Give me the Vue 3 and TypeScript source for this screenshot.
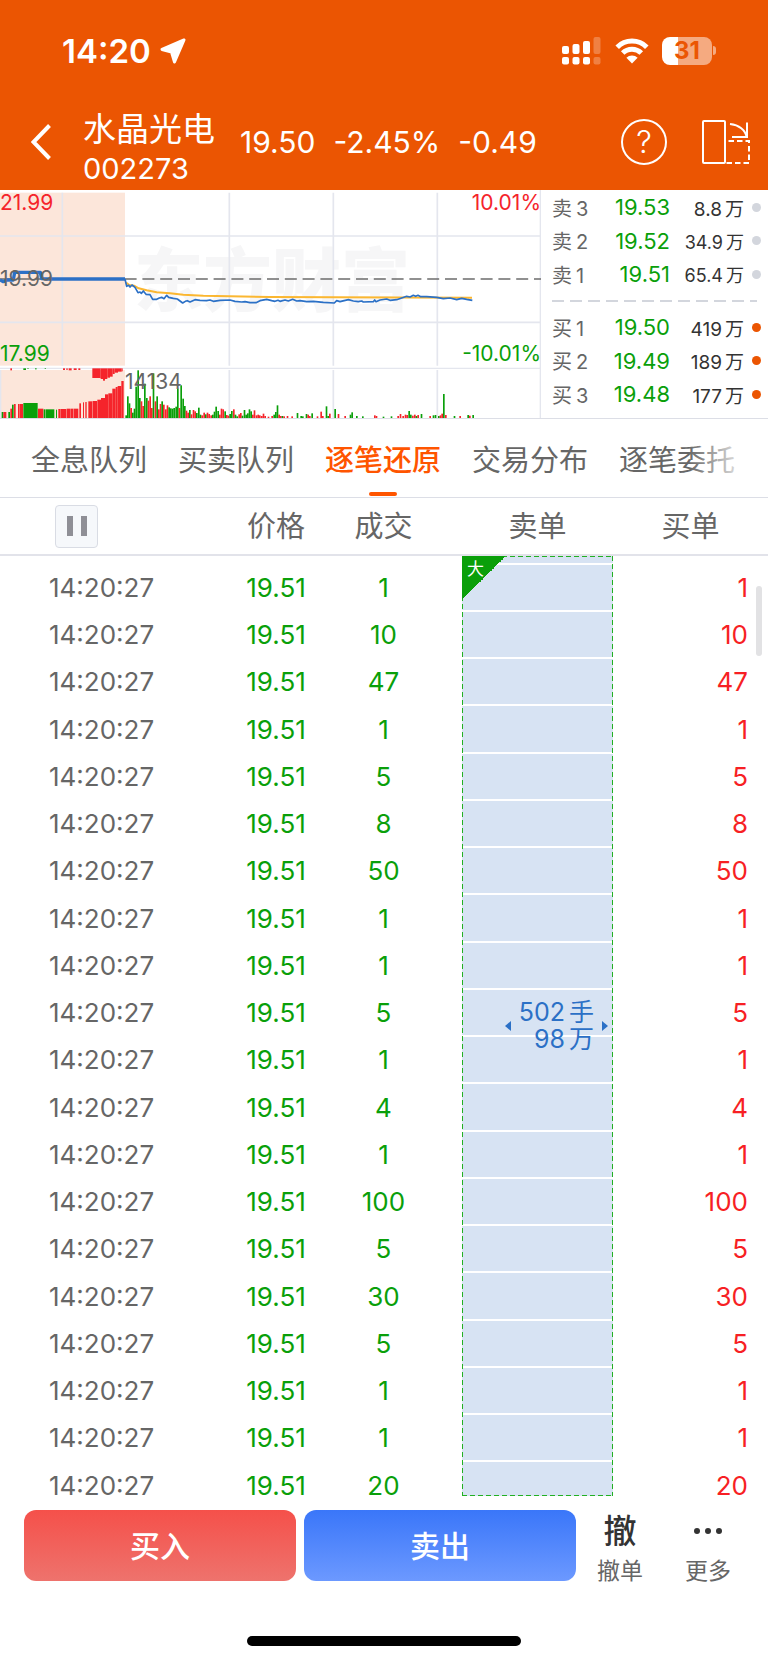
<script setup lang="ts">
import { ref } from 'vue'

type Level = { side: string; rank: number; price: string; volume: string; kind: 'ask' | 'bid' }
type Bar = [x: number, top: number, tone: 'r' | 'g', width?: number]

const asks: Level[] = [
  { side: '卖', rank: 3, price: '19.53', volume: '8.8', kind: 'ask' },
  { side: '卖', rank: 2, price: '19.52', volume: '34.9', kind: 'ask' },
  { side: '卖', rank: 1, price: '19.51', volume: '65.4', kind: 'ask' },
]
const bids: Level[] = [
  { side: '买', rank: 1, price: '19.50', volume: '419', kind: 'bid' },
  { side: '买', rank: 2, price: '19.49', volume: '189', kind: 'bid' },
  { side: '买', rank: 3, price: '19.48', volume: '177', kind: 'bid' },
]

const tabs = ['全息队列', '买卖队列', '逐笔还原', '交易分布', '逐笔委托']
const activeTab = ref('逐笔还原')
const paused = ref(false)

const trades = [1, 10, 47, 1, 5, 8, 50, 1, 1, 5, 1, 4, 1, 100, 5, 30, 5, 1, 1, 20]

// Call-auction period: volume rising from the baseline
const auctionBars: Bar[] = [
  [5, 672, 'g'], [10, 672, 'r', 9], [25, 672, 'g', 5], [31, 662, 'r'], [36, 650, 'g'], [42, 648, 'r', 5],
  [54, 648, 'r', 5], [60, 648, 'r', 9], [70, 645, 'g', 43], [114, 662, 'r', 16], [131, 664, 'g', 5], [137, 664, 'g', 26],
  [168, 665, 'g', 3], [175, 663, 'r', 7], [183, 663, 'r', 16], [200, 662, 'r', 12], [213, 662, 'r', 7], [221, 662, 'r', 14],
  [238, 646, 'r', 5], [249, 643, 'r', 3], [256, 642, 'r', 4], [265, 640, 'r', 12], [278, 639, 'r', 13], [292, 635, 'r', 11],
  [303, 630, 'r', 12], [315, 619, 'r', 10], [325, 616, 'r', 12], [337, 602, 'r', 10], [347, 597, 'r', 6], [353, 594, 'r', 11],
  [364, 579, 'r', 7],
]

// Unmatched volume hanging from the divider
const hangingBars: Bar[] = [
  [31, 547, 'r', 5], [70, 546, 'g', 8], [82, 543, 'g', 4], [105, 544, 'g', 5], [134, 543, 'g', 4],
  [189, 546, 'r', 6], [199, 546, 'r', 4], [206, 547, 'r', 9], [221, 546, 'r', 9], [235, 546, 'r', 6],
  [277, 570, 'r', 25], [302, 573, 'r', 7], [309, 578, 'r', 6], [315, 573, 'r', 7], [322, 569, 'r', 8],
  [330, 566, 'r', 8], [338, 558, 'r', 6], [344, 554, 'r', 10], [354, 551, 'r', 11], [365, 550, 'r', 3],
]

const sessionBars: Bar[] = [
  [376, 682, 'g'], [381, 625, 'g'], [386, 646, 'g'], [391, 660, 'r'], [396, 674, 'g'], [401, 662, 'g'], [406, 596, 'g'],
  [412, 547, 'g'], [417, 630, 'g'], [422, 640, 'r'], [427, 654, 'r'], [432, 587, 'g'], [438, 630, 'g'], [443, 638, 'r'],
  [448, 625, 'r'], [453, 660, 'r'], [458, 556, 'g'], [464, 640, 'r'], [469, 625, 'g'], [474, 664, 'r'], [479, 648, 'r'],
  [484, 640, 'g'], [489, 650, 'r'], [495, 664, 'r'], [500, 652, 'r'], [505, 658, 'g'], [510, 661, 'g'], [515, 662, 'g'],
  [520, 660, 'g'], [526, 656, 'g'], [531, 602, 'g'], [536, 660, 'r'], [541, 592, 'g'], [547, 632, 'g'], [552, 654, 'g'],
  [557, 668, 'r'], [562, 674, 'r'], [567, 666, 'g'], [572, 679, 'r'], [578, 666, 'r'], [583, 670, 'r'], [588, 675, 'g'],
  [594, 659, 'g'], [599, 680, 'g'], [604, 682, 'r'], [610, 674, 'r'], [615, 679, 'g'], [620, 674, 'r'], [625, 678, 'r'],
  [631, 682, 'r'], [636, 680, 'g'], [641, 671, 'g'], [646, 656, 'g'], [652, 669, 'g'], [657, 680, 'r'], [662, 662, 'r'],
  [667, 664, 'r'], [673, 670, 'g'], [678, 681, 'r'], [683, 683, 'r'], [688, 678, 'g'], [693, 669, 'g'], [699, 664, 'r'],
  [704, 680, 'g'], [709, 685, 'g'], [715, 679, 'r'], [720, 675, 'r'], [725, 683, 'g'], [731, 666, 'g'], [736, 680, 'g'],
  [741, 676, 'g'], [746, 664, 'g'], [751, 670, 'g'], [756, 680, 'r'], [761, 667, 'r'], [767, 682, 'r'], [772, 680, 'r'],
  [777, 682, 'r'], [783, 684, 'r'], [788, 677, 'r'], [793, 684, 'r'], [803, 686, 'r'], [814, 684, 'r'], [820, 680, 'g'],
  [825, 672, 'g'], [830, 652, 'g'], [835, 680, 'r'], [840, 684, 'r'], [845, 684, 'g'], [850, 685, 'r'], [860, 684, 'r'],
  [874, 685, 'r'], [890, 675, 'g'], [901, 684, 'g'], [906, 685, 'g'], [917, 678, 'g'], [922, 680, 'r'], [927, 684, 'r'],
  [934, 676, 'g'], [950, 685, 'r'], [961, 671, 'r'], [966, 684, 'r'], [977, 655, 'g'], [982, 684, 'g'], [987, 677, 'r'],
  [1003, 663, 'g'], [1013, 678, 'r'], [1033, 684, 'r'], [1049, 680, 'g'], [1054, 673, 'g'], [1068, 684, 'g'], [1086, 685, 'g'],
  [1122, 682, 'r'], [1127, 684, 'r'], [1148, 686, 'g'], [1172, 685, 'g'], [1192, 684, 'r'], [1199, 678, 'r'], [1207, 684, 'r'],
  [1214, 680, 'r'], [1219, 681, 'r'], [1225, 669, 'g'], [1230, 680, 'g'], [1236, 683, 'r'], [1242, 680, 'r'], [1247, 684, 'g'],
  [1252, 681, 'r'], [1262, 678, 'g'], [1288, 684, 'r'], [1298, 682, 'g'], [1304, 681, 'g'], [1314, 684, 'g'], [1319, 682, 'r'],
  [1324, 677, 'r'], [1329, 618, 'g'], [1335, 681, 'r'], [1361, 684, 'g'], [1378, 684, 'r'], [1402, 681, 'g'], [1407, 683, 'r'],
  [1417, 681, 'g'],
]

const toneFill = { r: '#f5242b', g: '#0a9f0a' }
</script>

<template>
  <div class="page">
    <header class="top">
      <div class="status">
        <div class="clock">
          <span>14:20</span>
          <svg class="locate" viewBox="0 0 26 26" aria-hidden="true">
            <path d="M24 2 L2 11.500 L11.500 14 L14.500 24 Z" />
          </svg>
        </div>
        <div class="signals">
          <svg class="cell" viewBox="0 0 39 28" aria-hidden="true">
            <g fill="#fff">
              <rect x="0" y="9" width="7" height="8" rx="2" />
              <rect x="10.500" y="7" width="7" height="10" rx="2" />
              <rect x="21" y="4" width="7" height="13" rx="2" />
              <rect x="0" y="20" width="7" height="7.500" rx="2" />
              <rect x="10.500" y="20" width="7" height="7.500" rx="2" />
              <rect x="21" y="20" width="7" height="7.500" rx="2" />
            </g>
            <g fill="#fff" opacity=".25">
              <rect x="31.500" y="0" width="7" height="17" rx="2" />
              <rect x="31.500" y="20" width="7" height="7.500" rx="2" />
            </g>
          </svg>
          <svg class="wifi" viewBox="0 0 34 26" aria-hidden="true">
            <g fill="none" stroke="#fff" stroke-width="5">
              <path d="M2.200 9.200 A21 21 0 0 1 31.800 9.200" />
              <path d="M7.700 15 A13.200 13.200 0 0 1 26.300 15" />
            </g>
            <path d="M17 25.500 L11.400 19.700 A8 8 0 0 1 22.600 19.700 Z" fill="#fff" />
          </svg>
          <div class="battery"><span class="charge">31</span></div>
        </div>
      </div>

      <div class="nav">
        <button class="icon-btn back" type="button" aria-label="返回">
          <svg viewBox="0 0 20 36"><path d="M18.500 1.500 L2.500 18 L18.500 34.500" /></svg>
        </button>
        <h1 class="title">
          <span class="name">水晶光电</span>
          <span class="code">002273</span>
        </h1>
        <div class="quote">
          <span>19.50</span>
          <span>-2.45%</span>
          <span>-0.49</span>
        </div>
        <button class="help" type="button" aria-label="帮助">?</button>
        <button class="icon-btn rotate" type="button" aria-label="横屏">
          <svg viewBox="0 0 48 46">
            <g fill="none" stroke="#fff" stroke-width="2">
              <rect x="1" y="2" width="22" height="42" rx="1" />
              <path d="M28 5 C37 6 43.500 11 44.500 18 M45 3.500 V18 H30" />
              <path d="M26.500 22 H47 V44 H24" stroke-dasharray="5.500 3" />
            </g>
          </svg>
        </button>
      </div>
    </header>

    <section class="market">
      <div class="chart">
        <svg class="plot" viewBox="0 6 1623 684" preserveAspectRatio="none" aria-hidden="true">
          <rect x="0" y="14" width="375" height="519" fill="#fce6da" />
          <rect x="0" y="546" width="375" height="144" fill="#fce6da" />
          <text class="mark" x="402" y="353">东方财富</text>
          <g stroke="#e4e6ee" stroke-width="5">
            <path d="M0 144 H1623 M0 403 H1623" />
            <path d="M187 14 V533 M688 14 V533 M1000 14 V533 M1312 14 V533 M688 546 V690 M1000 546 V690 M1312 546 V690" />
            <path d="M0 541 H1623 M1621 6 V690" stroke-width="4" />
            <path d="M2 546 V690" stroke-width="4" />
          </g>
          <path d="M0 273 H1623" stroke="#6c6c6c" stroke-width="4" stroke-dasharray="36 17.400" />
          <rect v-for="b in hangingBars" :key="'h' + b[0]" :x="b[0]" y="541" :width="b[3] ?? 5" :height="b[1] - 541" :fill="toneFill[b[2]]" />
          <rect v-for="b in auctionBars" :key="'a' + b[0]" :x="b[0]" :y="b[1]" :width="b[3] ?? 5" :height="690 - b[1]" :fill="toneFill[b[2]]" />
          <rect v-for="b in sessionBars" :key="'s' + b[0]" :x="b[0]" :y="b[1]" :width="b[3] ?? 5" :height="690 - b[1]" :fill="toneFill[b[2]]" />
          <g fill="none" stroke-linejoin="round">
            <path stroke="#fbb731" stroke-width="6" d="M378 284 L388 291 L402 293 L416 301 L440 307 L470 313 L510 316 L550 320 L610 323 L688 325 L810 327 L1000 328 L1416 329" />
            <path stroke="#2b70c6" stroke-width="10" d="M0 276 L10 281 L20 276 L40 276 L44 253 L121 253 L125 272 L146 273 H375" />
            <path stroke="#2b70c6" stroke-width="5" d="M375 273 L380 295 L386 292 L390 297 L396 291 L405 298 L414 314 L420 312 L424 316 L430 309 L438 319 L450 320 L458 334 L470 334 L478 330 L485 328 L492 332 L500 322 L506 328 L520 331 L532 333 L548 345 L556 340 L562 338 L570 342 L585 335 L600 337 L620 338 L630 336 L640 340 L660 337 L690 336 L705 340 L725 342 L735 341 L750 344 L768 344 L780 338 L800 334 L815 338 L825 340 L834 337 L840 340 L855 336 L865 339 L878 334 L890 339 L900 338 L920 341 L940 340 L970 343 L1003 345 L1010 338 L1020 341 L1045 335 L1060 339 L1075 341 L1085 339 L1090 342 L1120 341 L1124 336 L1128 341 L1140 336 L1160 333 L1170 337 L1190 335 L1205 330 L1220 325 L1230 327 L1240 322 L1247 325 L1254 322 L1262 326 L1280 326 L1310 328 L1330 332 L1350 330 L1370 335 L1385 331 L1400 334 L1417 337" />
          </g>
        </svg>
        <span class="tag high">21.99</span>
        <span class="tag middle">19.99</span>
        <span class="tag low">17.99</span>
        <span class="tag high-pct">10.01%</span>
        <span class="tag low-pct">-10.01%</span>
        <span class="tag volume">14134</span>
      </div>

      <div class="book">
        <div class="levels">
          <div v-for="l in asks" :key="l.rank" class="level" :class="l.kind">
            <span class="rank">{{ l.side }}<b>{{ l.rank }}</b></span>
            <span class="price">{{ l.price }}</span>
            <span class="vol" :class="{ small: l.volume.length > 3 }">{{ l.volume }}<b>万</b></span>
            <i class="dot"></i>
          </div>
        </div>
        <div class="split"></div>
        <div class="levels">
          <div v-for="l in bids" :key="l.rank" class="level" :class="l.kind">
            <span class="rank">{{ l.side }}<b>{{ l.rank }}</b></span>
            <span class="price">{{ l.price }}</span>
            <span class="vol">{{ l.volume }}<b>万</b></span>
            <i class="dot"></i>
          </div>
        </div>
      </div>
    </section>

    <nav class="tabs">
      <button
        v-for="t in tabs"
        :key="t"
        type="button"
        class="tab"
        :class="{ active: t === activeTab }"
        @click="activeTab = t"
      >{{ t }}</button>
    </nav>

    <main class="ticks">
      <table>
        <colgroup>
          <col class="c-time" /><col class="c-price" /><col class="c-qty" /><col class="c-sell" /><col class="c-buy" />
        </colgroup>
        <thead>
          <tr>
            <th class="h-time">
              <button class="pause" type="button" aria-label="暂停" :aria-pressed="paused" @click="paused = !paused">
                <i></i><i></i>
              </button>
            </th>
            <th>价格</th>
            <th class="h-qty">成交</th>
            <th>卖单</th>
            <th>买单</th>
          </tr>
        </thead>
        <tbody>
          <tr class="lead">
            <td colspan="3"></td>
            <td class="order" :rowspan="trades.length + 1">
              <span class="big">大</span>
              <div class="summary">
                <i class="arrow left"></i>
                <span class="lots">502<b>手</b><br />98<b>万</b></span>
                <i class="arrow right"></i>
              </div>
            </td>
            <td></td>
          </tr>
          <tr v-for="(n, i) in trades" :key="i" class="row">
            <td class="time">14:20:27</td>
            <td class="deal">19.51</td>
            <td class="deal qty">{{ n }}</td>
            <td class="buy">{{ n }}</td>
          </tr>
        </tbody>
      </table>
      <i class="thumb"></i>
    </main>

    <footer class="actions">
      <button class="trade buy-btn" type="button">买入</button>
      <button class="trade sell-btn" type="button">卖出</button>
      <button class="more" type="button"><span class="glyph">撤</span><span>撤单</span></button>
      <button class="more" type="button">
        <span class="glyph">
          <svg viewBox="0 0 28 6" aria-hidden="true"><circle cx="3" cy="3" r="3" /><circle cx="14" cy="3" r="3" /><circle cx="25" cy="3" r="3" /></svg>
        </span>
        <span>更多</span>
      </button>
    </footer>
    <div class="home"></div>
  </div>
</template>

<style>
body {
  margin: 0;
  background: #fff;
}
</style>

<style scoped>
.page {
  display: flex;
  flex-direction: column;
  min-height: 100vh;
  box-sizing: border-box;
  color: #666;
  font-family: Inter, "Noto Sans CJK SC", sans-serif;
}
button {
  margin: 0;
  padding: 0;
  border: 0;
  background: none;
  color: inherit;
  font: inherit;
}
b {
  font-weight: inherit;
}
svg {
  display: block;
}

/* Header */
.top {
  background: #eb5502;
  color: #fff;
}
.status {
  display: flex;
  justify-content: space-between;
  align-items: center;
  height: 94px;
  padding: 8px 56px 0 62px;
  box-sizing: border-box;
}
.clock {
  display: flex;
  align-items: center;
  gap: 9px;
  font-size: 33px;
  font-weight: 600;
}
.locate {
  width: 26px;
  height: 26px;
}
.locate path {
  fill: #fff;
  stroke: #fff;
  stroke-width: 3;
  stroke-linejoin: round;
}
.signals {
  display: flex;
  align-items: center;
}
.cell {
  width: 39px;
  height: 28px;
}
.wifi {
  width: 34px;
  height: 26px;
  margin-left: 14px;
}
.battery {
  position: relative;
  width: 50px;
  height: 28px;
  margin-left: 13px;
  border-radius: 8px;
  background: linear-gradient(90deg, #fff 32%, #f5aa80 32%);
  color: #eb5502;
  font-size: 24px;
  font-weight: 700;
  line-height: 28px;
  text-align: center;
}
.battery::after {
  content: "";
  position: absolute;
  left: 51px;
  top: 9px;
  width: 3px;
  height: 9px;
  border-radius: 0 4px 4px 0;
  background: #f5aa80;
}
.nav {
  display: flex;
  align-items: center;
  height: 96px;
  padding: 0 18px 0 31px;
}
.back svg {
  width: 20px;
  height: 36px;
}
.back path {
  fill: none;
  stroke: #fff;
  stroke-width: 4;
}
.title {
  display: flex;
  flex-direction: column;
  margin: 0 0 0 32px;
  padding-top: 14px;
  font-size: 29px;
  font-weight: 400;
  line-height: 39px;
}
.name {
  font-size: 33px;
}
.quote {
  display: flex;
  gap: 18px;
  margin-left: 25px;
  font-size: 30px;
}
.help {
  width: 46px;
  height: 46px;
  margin-left: auto;
  border: 2px solid #fff;
  border-radius: 50%;
  box-sizing: border-box;
  font-size: 31px;
  line-height: 42px;
  font-weight: 300;
}
.rotate {
  margin-left: 35px;
}
.rotate svg {
  width: 48px;
  height: 46px;
}

/* Intraday chart and order book */
.market {
  display: grid;
  grid-template-columns: minmax(0, 1fr) 227px;
  height: 228px;
  border-bottom: 1px solid #dcdee6;
}
.chart {
  position: relative;
}
.plot {
  width: 100%;
  height: 228px;
}
.mark {
  fill: #f6f6f7;
  font-family: "Noto Sans CJK SC", sans-serif;
  font-size: 207px;
  font-weight: 900;
}
.tag {
  position: absolute;
  font-size: 21px;
  line-height: 24px;
}
.high,
.high-pct {
  top: 1px;
  color: #f5242b;
}
.low,
.low-pct {
  top: 152px;
  color: #0a9f0a;
}
.high,
.low,
.middle {
  left: 0;
}
.high-pct,
.low-pct {
  right: 0;
}
.middle {
  top: 77px;
}
.volume {
  left: 125px;
  top: 180px;
}
.book {
  padding: 0 11px;
}
.level {
  display: grid;
  grid-template-columns: 40px 78px 74px 15px;
  align-items: center;
  height: 34px;
}
.level:nth-child(2) {
  height: 33px;
}
.rank {
  font-size: 20px;
}
.rank b {
  margin-left: 4px;
}
.price {
  color: #0a9f0a;
  font-size: 22px;
  text-align: right;
}
.vol {
  color: #333;
  font-size: 19px;
  text-align: right;
}
.vol.small {
  font-size: 18px;
}
.vol b {
  margin-left: 3px;
}
.dot {
  justify-self: end;
  width: 9px;
  height: 9px;
  margin-right: -2px;
  border-radius: 50%;
  background: #d3d6dd;
}
.bid .dot {
  background: #eb5502;
}
.split {
  height: 2px;
  margin: 9px 0 8px;
  background: repeating-linear-gradient(90deg, #d3d6dd 0 12px, transparent 12px 18px);
}

/* Tabs */
.tabs {
  position: relative;
  display: flex;
  gap: 31px;
  height: 78px;
  padding-left: 31px;
  overflow: hidden;
  border-bottom: 1px solid #dcdee6;
}
.tabs::after {
  content: "";
  position: absolute;
  right: 0;
  top: 0;
  width: 80px;
  height: 78px;
  background: linear-gradient(90deg, rgba(255, 255, 255, 0), #fff 80%);
  pointer-events: none;
}
.tab {
  position: relative;
  flex: none;
  font-size: 29px;
}
.tab.active {
  color: #ff5500;
  font-weight: 500;
}
.tab.active::after {
  content: "";
  position: absolute;
  left: 50%;
  bottom: 1px;
  width: 28px;
  height: 4px;
  margin-left: -14px;
  border-radius: 2px;
  background: #ff5500;
}

/* Tick table */
.ticks {
  position: relative;
}
table {
  width: 100%;
  table-layout: fixed;
  border-spacing: 0;
  font-size: 26px;
}
.c-time {
  width: 230px;
}
.c-price {
  width: 92px;
}
.c-qty {
  width: 140px;
}
.c-sell {
  width: 151px;
}
.c-buy {
  width: 155px;
}
th {
  height: 54px;
  padding: 2px 0 0;
  border-bottom: 2px solid #e2e3ea;
  font-size: 29px;
  font-weight: 400;
  line-height: 40px;
}
.h-time {
  padding: 0 0 0 55px;
}
.h-qty {
  padding-right: 17px;
}
.pause {
  display: flex;
  justify-content: center;
  align-items: center;
  gap: 8px;
  width: 43px;
  height: 43px;
  border: 1px solid #d9dce4;
  border-radius: 4px;
  box-sizing: border-box;
  background: #f6f8fb;
}
.pause i {
  width: 6px;
  height: 20px;
  background: #8f8f96;
}
td {
  padding: 0;
}
.lead td {
  height: 8px;
}
.row {
  height: 47px;
}
.row:nth-child(4n) {
  height: 48px;
}
.row:last-child {
  height: 34px;
}
.row td {
  padding-top: 14px;
  line-height: 20px;
  vertical-align: top;
}
.row .time {
  padding-left: 49px;
}
.deal {
  color: #0a9f0a;
  text-align: center;
}
.row .qty {
  padding-right: 17px;
}
.row .buy {
  padding-right: 20px;
  color: #f71f24;
  text-align: right;
}
.order {
  --dash: #22b022 0 5px, transparent 5px 8px;
  position: relative;
  background:
    repeating-linear-gradient(90deg, var(--dash)) 0 0 / 100% 1px no-repeat,
    repeating-linear-gradient(90deg, var(--dash)) 0 100% / 100% 1px no-repeat,
    repeating-linear-gradient(var(--dash)) 0 0 / 1px 100% no-repeat,
    repeating-linear-gradient(var(--dash)) 100% 0 / 1px 100% no-repeat,
    repeating-linear-gradient(
      #d7e3f3 0 7px,
      #fff 7px 9px,
      #d7e3f3 9px 54px,
      #fff 54px 56px,
      #d7e3f3 56px 101px,
      #fff 101px 103px,
      #d7e3f3 103px 148px,
      #fff 148px 150px,
      #d7e3f3 150px 189px
    );
  vertical-align: middle;
}
.big {
  position: absolute;
  left: 0;
  top: 0;
  width: 44px;
  height: 44px;
  padding-left: 5px;
  box-sizing: border-box;
  background: linear-gradient(135deg, #0a9f0a 50%, transparent 50%);
  color: #fff;
  font-size: 17px;
  line-height: 26px;
}
.summary {
  display: flex;
  justify-content: flex-end;
  align-items: center;
  gap: 8px;
  padding-right: 5px;
  color: #2b70c6;
  font-size: 25px;
  line-height: 27px;
  text-align: right;
}
.lots b {
  margin-left: 4px;
}
.arrow {
  border: 5px solid transparent;
}
.arrow.left {
  border-left: 0;
  border-right: 6px solid #2b70c6;
}
.arrow.right {
  border-right: 0;
  border-left: 6px solid #2b70c6;
}
.thumb {
  position: absolute;
  right: 6px;
  top: 88px;
  width: 6px;
  height: 70px;
  border-radius: 3px;
  background: #e2e2e4;
}

/* Bottom actions */
.actions {
  display: flex;
  padding: 14px 16px 0 24px;
}
.trade {
  flex: 1;
  height: 71px;
  padding-bottom: 4px;
  border-radius: 12px;
  color: #fff;
  font-size: 30px;
  font-weight: 500;
}
.buy-btn {
  margin-right: 8px;
  background: linear-gradient(#f5504a, #ee736d);
}
.sell-btn {
  background: linear-gradient(#3a76f9, #6c99ff);
}
.more {
  display: flex;
  flex-direction: column;
  align-items: center;
  width: 88px;
  font-size: 23px;
  line-height: 40px;
}
.glyph {
  display: flex;
  align-items: center;
  height: 41px;
  color: #333;
  font-size: 33px;
  font-weight: 500;
}
.glyph svg {
  width: 28px;
  height: 6px;
  fill: #333;
}
.home {
  width: 274px;
  height: 10px;
  margin: auto auto 17px;
  border-radius: 5px;
  background: #000;
}
</style>
